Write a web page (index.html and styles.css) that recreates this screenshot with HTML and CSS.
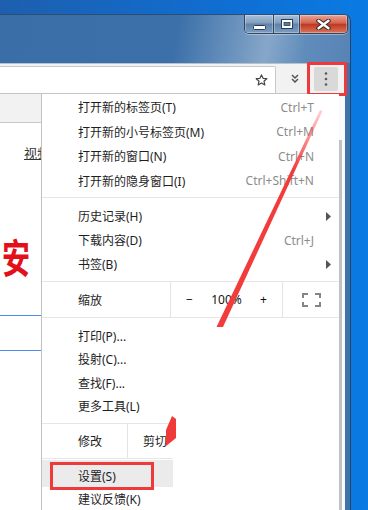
FILE: index.html
```html
<!DOCTYPE html>
<html lang="zh-CN">
<head>
    <meta charset="UTF-8">
    <title>Chrome 菜单</title>
    <link rel="stylesheet" href="styles.css">
</head>
<body>
    <div class="window">
        <div class="titlebar">
            <div class="caption">
                <div class="cap-btn cap-min">
                    <svg width="13" height="5" viewBox="0 0 13 5"><rect x=".5" y=".5" width="12" height="4" rx="1" fill="#fff" stroke="#2b3d55"/></svg>
                </div>
                <div class="cap-btn cap-max">
                    <svg width="12" height="10" viewBox="0 0 12 10"><rect x=".5" y=".5" width="11" height="9" fill="#fff" stroke="#2b3d55"/><rect x="3" y="3.5" width="6" height="3" fill="#5a7ca2" stroke="#2b3d55" stroke-width=".8"/></svg>
                </div>
                <div class="cap-btn cap-close">
                    <svg width="15" height="11" viewBox="0 0 15 11"><path d="M2.5 1.8l10 7.4M12.5 1.8l-10 7.4" stroke="#3b2a2a" stroke-width="4.4" stroke-linecap="round"/><path d="M2.5 1.8l10 7.4M12.5 1.8l-10 7.4" stroke="#fff" stroke-width="2.4" stroke-linecap="round"/></svg>
                </div>
            </div>
        </div>

        <div class="client">
            <div class="toolbar">
                <div class="omnibox">
                    <svg width="13" height="12" viewBox="0 0 13 12"><path d="M6.5.9l1.6 3.4 3.7.4-2.8 2.5.8 3.7-3.3-1.9-3.3 1.9.8-3.7L1.2 4.7l3.7-.4z" fill="none" stroke="#454545" stroke-width="1.2" stroke-linejoin="round"/></svg>
                </div>
                <div class="overflow">
                    <svg width="8" height="9" viewBox="0 0 8 9"><path d="M1 1l3 3 3-3M1 5l3 3 3-3" fill="none" stroke="#555" stroke-width="1.5"/></svg>
                </div>
                <div class="menu-btn">
                    <svg width="4" height="14" viewBox="0 0 4 14"><circle cx="2" cy="1.5" r="1.3" fill="#5a5a5a"/><circle cx="2" cy="7" r="1.3" fill="#5a5a5a"/><circle cx="2" cy="12.5" r="1.3" fill="#5a5a5a"/></svg>
                    <span class="mark"></span>
                </div>
            </div>

            <div class="viewport">
                <div class="page">
                    <div class="page-head"></div>
                    <div class="page-nav"><a>视频</a></div>
                    <div class="page-hero">安</div>
                    <div class="page-rule first"></div>
                    <div class="page-rule second"></div>

                    <div class="menu">
                        <div class="group g1">
                            <div class="item"><span class="label">打开新的标签页(T)</span><span class="key">Ctrl+T</span></div>
                            <div class="item"><span class="label">打开新的小号标签页(M)</span><span class="key">Ctrl+M</span></div>
                            <div class="item"><span class="label">打开新的窗口(N)</span><span class="key">Ctrl+N</span></div>
                            <div class="item"><span class="label">打开新的隐身窗口(I)</span><span class="key">Ctrl+Shift+N</span></div>
                        </div>
                        <div class="sep sep-a"></div>
                        <div class="group">
                            <div class="item sub"><span class="label">历史记录(H)</span><svg width="5" height="9" viewBox="0 0 5 9"><path d="M0 0l5 4.5L0 9z" fill="#555"/></svg></div>
                            <div class="item"><span class="label">下载内容(D)</span><span class="key">Ctrl+J</span></div>
                            <div class="item sub"><span class="label">书签(B)</span><svg width="5" height="9" viewBox="0 0 5 9"><path d="M0 0l5 4.5L0 9z" fill="#555"/></svg></div>
                        </div>
                        <div class="sep sep-b"></div>
                        <div class="zoom-row">
                            <div class="zoom-label">缩放</div>
                            <div class="zoom-ctrl">
                                <span>−</span>
                                <span>100%</span>
                                <span>+</span>
                            </div>
                            <div class="zoom-full">
                                <svg width="19" height="14" viewBox="0 0 19 14"><path d="M1 5V1h5M13 1h5v4M18 9v4h-5M6 13H1V9" fill="none" stroke="#858585" stroke-width="2"/></svg>
                            </div>
                        </div>
                        <div class="sep sep-c"></div>
                        <div class="group g3">
                            <div class="item"><span class="label">打印(P)...</span></div>
                            <div class="item"><span class="label">投射(C)...</span></div>
                            <div class="item"><span class="label">查找(F)...</span></div>
                            <div class="item"><span class="label">更多工具(L)</span></div>
                        </div>
                        <div class="lower">
                            <div class="sep sep-b"></div>
                            <div class="edit-row">
                                <div class="edit-label">修改</div>
                                <div class="edit-cell">剪切</div>
                            </div>
                            <div class="item item-hl"><span class="label">设置(S)</span><span class="mark"></span></div>
                            <div class="item item-last"><span class="label">建议反馈(K)</span></div>
                        </div>
                    </div>

                    <!-- red annotation arrow drawn over the screenshot -->
                    <svg class="annot" width="339" height="416" viewBox="0 0 339 416">
                        <defs>
                            <linearGradient id="fade" x1="0" y1="111" x2="0" y2="170" gradientUnits="userSpaceOnUse">
                                <stop offset="0" stop-color="#f44" stop-opacity=".25"/>
                                <stop offset="1" stop-color="#f23b3b"/>
                            </linearGradient>
                        </defs>
                        <g transform="translate(0,-94)">
                            <polygon points="320,110 322.5,111 223,327 216.5,327" fill="url(#fade)"/>
                            <polygon points="172,416 176,419 176,438 166,446 166,430" fill="#f03a3a"/>
                        </g>
                    </svg>
                </div>
                <div class="vscroll"><div class="thumb"></div></div>
            </div>
        </div>
    </div>
</body>
</html>
```

FILE: styles.css
```css
* {
    margin: 0px;
    padding: 0px;
    box-sizing: border-box;
}

html, body {
    width: 368px;
    height: 510px;
    overflow: hidden;
}

body {
    padding-top: 14px;
    background: linear-gradient(90deg, #1d5fae, #0f6fd4 65%, #0a7be3);
    font-family: "Noto Sans", "Noto Sans CJK SC", sans-serif;
}

/* window frame */

.window {
    width: 351px;
    height: 496px;
    display: flex;
    flex-direction: column;
    overflow: hidden;
    background: #3f73aa;
    border-top: 1px solid #2d4d73;
    border-right: 1px solid #22446a;
    border-top-right-radius: 7px;
}

.titlebar {
    height: 48px;
    flex: none;
    display: flex;
    justify-content: flex-end;
    align-items: flex-start;
    padding-right: 2px;
    background: linear-gradient(100deg, #3a6ea6 0%, #3b70a8 50%, #6e95bf 68%, #87a7c9 76%, #5f8cbb 87%, #5784b5 100%);
}

.caption {
    display: flex;
    height: 19px;
    border: 1px solid #34465d;
    border-top: none;
    border-radius: 0 0 5px 5px;
    overflow: hidden;
    box-shadow: 0 1px 0 rgba(255, 255, 255, 0.35);
}

.cap-btn {
    display: flex;
    align-items: center;
    justify-content: center;
    height: 100%;
    box-shadow: inset 0 0 0 1px rgba(255, 255, 255, 0.3);
}

.cap-min {
    width: 29px;
    padding-top: 6px;
    border-right: 1px solid #34465d;
    background: linear-gradient(#a9c0d8, #809ebf 45%, #5f82aa 50%, #7d9ec3);
}

.cap-max {
    width: 26px;
    border-right: 1px solid #34465d;
    background: linear-gradient(#a9c0d8, #809ebf 45%, #5f82aa 50%, #7d9ec3);
}

.cap-close {
    flex: 1;
    width: 47px;
    background: linear-gradient(#e8a597, #d4634d 45%, #c0381f 52%, #d9755d);
}

/* browser chrome */

.client {
    flex: 1;
    min-height: 0;
    margin-right: 5px;
    display: flex;
    flex-direction: column;
    background: #fff;
}

.toolbar {
    height: 31px;
    flex: none;
    display: flex;
    background: #f2f2f2;
    border-top: 1px solid #b8c2cc;
    border-bottom: 1px solid #c4c4c4;
}

.omnibox {
    width: 276px;
    height: 27px;
    margin-top: 2px;
    display: flex;
    align-items: center;
    justify-content: flex-end;
    padding-right: 7px;
    background: #fff;
    border: 1px solid #c9c9c9;
    border-left: none;
    border-bottom: none;
    border-radius: 0 2px 0 0;
}

.overflow {
    width: 38px;
    display: flex;
    align-items: center;
    justify-content: center;
}

.menu-btn {
    position: relative;
    width: 24px;
    height: 24px;
    margin-top: 3px;
    display: flex;
    align-items: center;
    justify-content: center;
    background: #d9d9d9;
    border-radius: 2px;
}

.menu-btn .mark {
    position: absolute;
    left: -7px;
    top: -5px;
    width: 40px;
    height: 34px;
    border: 3px solid #ef3a3b;
}

.viewport {
    flex: 1;
    min-height: 0;
    display: flex;
}

.vscroll {
    width: 6px;
    flex: none;
    padding-top: 46px;
    background: #fafafa;
}

.vscroll .thumb {
    width: 3px;
    height: 100%;
    background: #c2c2c2;
}

/* web page under the menu */

.page {
    position: relative;
    flex: 1;
    overflow: hidden;
}

.page-head {
    height: 29px;
    background: #f2f2f2;
    border-bottom: 1px solid #c9c9c9;
}

.page-nav {
    margin-top: 22px;
    padding-left: 24px;
    font-size: 13px;
    line-height: 16px;
    color: #333;
}

.page-nav a {
    text-decoration: underline;
}

.page-hero {
    margin-top: 75px;
    padding-left: 3px;
    font-family: "Noto Sans CJK SC", sans-serif;
    font-size: 40px;
    line-height: 40px;
    font-weight: 700;
    color: #e1101a;
    transform: scaleX(0.7);
    transform-origin: left;
}

.page-rule {
    height: 1px;
    background: #4d8bf2;
}

.page-rule.first {
    margin-top: 39px;
}

.page-rule.second {
    margin-top: 34px;
}

/* dropdown menu */

.menu {
    position: absolute;
    top: 0;
    left: 41px;
    right: 0;
    bottom: 0;
    padding-top: 1px;
    background: #fff;
    border-left: 1px solid #c2c2c2;
    font-size: 12px;
    color: #1e1e1e;
}

.item {
    height: 24px;
    display: flex;
    align-items: center;
    padding: 0 25px 0 36px;
    white-space: nowrap;
}

.item .label {
    flex: 1;
}

.item .key {
    color: #8c8c8c;
}

.item.sub {
    padding-right: 8px;
}

.g1 .item {
    height: 24.5px;
}

.g3 .item {
    height: 23.5px;
}

.sep {
    height: 1px;
    background: #e6e6e6;
}

.sep-a {
    margin: 4px 0 6px;
}

.sep-b {
    margin-top: 5px;
}

.sep-c {
    margin-bottom: 6px;
}

.zoom-row {
    height: 35px;
    display: flex;
}

.zoom-label {
    width: 129px;
    display: flex;
    align-items: center;
    padding-left: 36px;
    border-right: 1px solid #e3e3e3;
}

.zoom-ctrl {
    width: 112px;
    display: flex;
    border-right: 1px solid #e3e3e3;
}

.zoom-ctrl span {
    width: 37px;
    display: flex;
    align-items: center;
    justify-content: center;
    color: #111;
}

.zoom-full {
    flex: 1;
    display: flex;
    align-items: center;
    justify-content: center;
}

/* the lower part of the screenshot is cut off on the right */
.lower {
    width: 131px;
    overflow: hidden;
}

.edit-row {
    height: 35px;
    display: flex;
    border-bottom: 1px solid #e6e6e6;
    white-space: nowrap;
}

.edit-label {
    width: 86px;
    flex: none;
    display: flex;
    align-items: center;
    padding-left: 36px;
    border-right: 1px solid #e3e3e3;
}

.edit-cell {
    display: flex;
    align-items: center;
    padding-left: 15px;
}

.item-hl {
    position: relative;
    height: 27px;
    margin-top: 1px;
    padding-top: 4px;
    background: #ebebeb;
}

.item-hl .mark {
    position: absolute;
    left: 8px;
    top: 2px;
    width: 104px;
    height: 28px;
    border: 3px solid #ef3a3b;
}

.item-last {
    height: 23px;
}

.annot {
    position: absolute;
    left: 0;
    top: 0;
    pointer-events: none;
}
```
